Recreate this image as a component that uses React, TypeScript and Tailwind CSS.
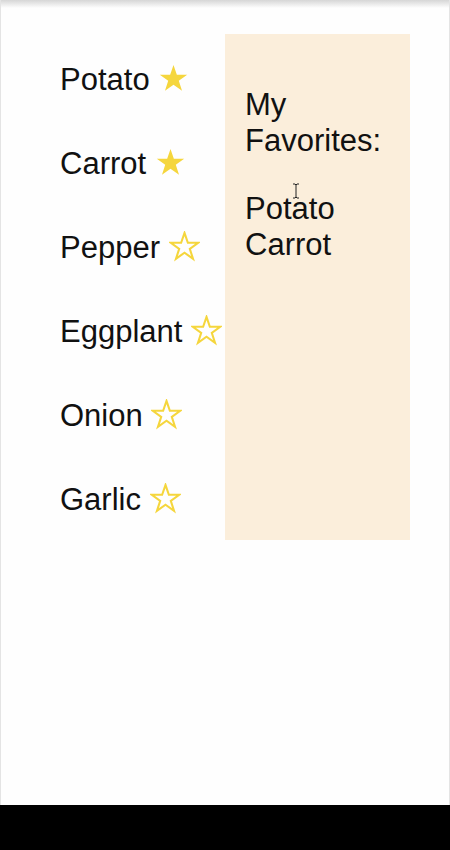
const veggies = [
  { name: 'Potato', fav: true },
  { name: 'Carrot', fav: true },
  { name: 'Pepper', fav: false },
  { name: 'Eggplant', fav: false },
  { name: 'Onion', fav: false },
  { name: 'Garlic', fav: false },
];

function Star({ filled }: { filled: boolean }) {
  return (
    <svg
      viewBox="0 0 24 24"
      className="inline-block w-[31px] h-[31px] align-[-4px]"
      fill={filled ? '#f5d63d' : 'none'}
      stroke="#f5d63d"
      strokeWidth={filled ? 0 : 1.6}
      strokeLinejoin="miter"
    >
      <path d="M12 1.5l2.6 7.6h8l-6.5 4.7 2.5 7.7L12 16.8l-6.6 4.7 2.5-7.7L1.4 9.1h8z" />
    </svg>
  );
}

function Cursor() {
  return (
    <svg viewBox="0 0 8 16" className="absolute left-[291px] top-[183px] w-[8px] h-[16px]">
      <path d="M1 1h2l1 1 1-1h2M4 2v12M1 15h2l1-1 1 1h2" fill="none" stroke="#222" strokeWidth="1" />
    </svg>
  );
}

export default function App() {
  return (
    <div className="h-[850px] w-[450px] flex flex-col bg-black font-['Liberation_Sans',Arial,sans-serif] text-[31px] text-[#111]">
      <div className="relative flex-1 bg-[#fefefe] border-x border-[#e4e4e4]">
        <div className="absolute inset-x-0 top-0 h-[8px] bg-gradient-to-b from-[#d6d6d6] to-[#fefefe]" />
        <div className="flex pt-[34px] pl-[59px]">
          <ul className="w-[165px] mt-[28px] flex flex-col gap-[48px] leading-[36px]">
            {veggies.map((v) => (
              <li key={v.name} className="whitespace-nowrap">
                {v.name} <Star filled={v.fav} />
              </li>
            ))}
          </ul>
          <div className="w-[185px] h-[506px] bg-[#fbeedb] pl-[20px] pt-[53px] leading-[36px]">
            <p>My</p>
            <p>Favorites:</p>
            <div className="mt-[32px]">
              <p>Potato</p>
              <p>Carrot</p>
            </div>
          </div>
        </div>
        <Cursor />
      </div>
      <div className="h-[45px] bg-black" />
    </div>
  );
}
